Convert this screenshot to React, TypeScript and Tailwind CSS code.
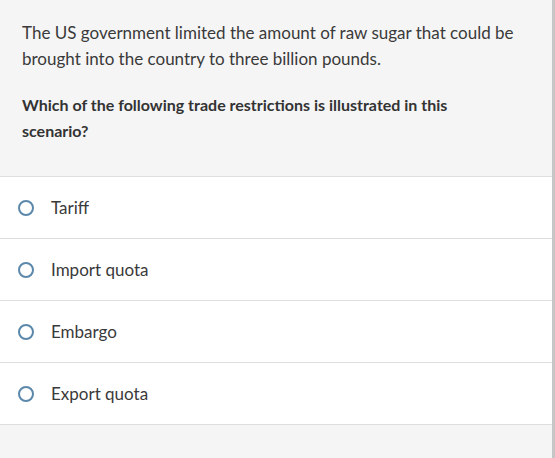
const options = ['Tariff', 'Import quota', 'Embargo', 'Export quota']

export default function App() {
  return (
    <div
      className="flex h-[458px] w-[555px] bg-[#f5f5f5] text-[#333333]"
      style={{ fontFamily: 'Lato, "Open Sans", sans-serif' }}
    >
      <div className="flex w-[552px] flex-col">
        {/* Question stem */}
        <div className="px-[22px] pt-5 pb-8 text-[17px] leading-[26px]">
          <p className="text-[#3a3a3a]">
            The US government limited the amount of raw sugar that could be brought into the
            country to three billion pounds.
          </p>
          <p className="mt-5 max-w-[440px] text-[16px] font-bold">
            Which of the following trade restrictions is illustrated in this scenario?
          </p>
        </div>

        {/* Answer choices */}
        <div className="border-t border-[#dedede] bg-white">
          {options.map((opt) => (
            <label
              key={opt}
              className="flex h-[62px] items-center border-b border-[#dedede] pl-[18px]"
            >
              <span className="h-[16px] w-[16px] rounded-full border-2 border-[#5b88aa]" />
              <span className="ml-[17px] text-[17px] text-[#3a3a3a]">{opt}</span>
            </label>
          ))}
        </div>
      </div>
      <div className="w-[3px] bg-[#c6c6c6]" />
    </div>
  )
}
